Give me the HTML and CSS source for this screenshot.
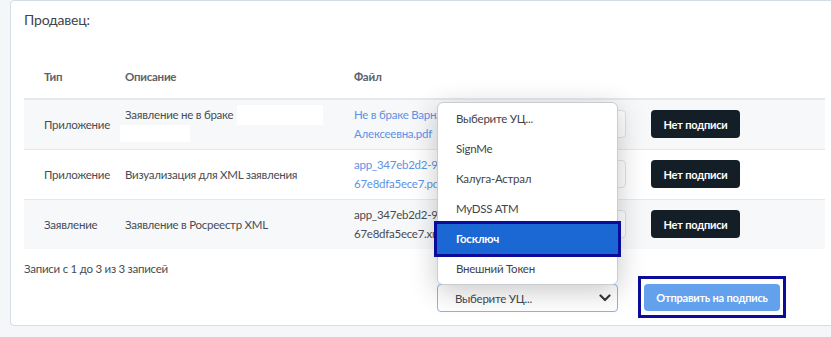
FILE: index.html
```html
<!DOCTYPE html>
<html lang="ru">
<head>
  <meta charset="UTF-8" />
  <title>Подписание документов</title>
  <link rel="stylesheet" href="styles.css">
</head>
<body>
  <div class="card">
    <h2 class="card-title">Продавец:</h2>

    <table class="docs">
      <colgroup>
        <col class="c-type"><col class="c-desc"><col class="c-file"><col class="c-ca"><col class="c-sign"><col>
      </colgroup>
      <thead>
        <tr>
          <th>Тип</th>
          <th>Описание</th>
          <th>Файл</th>
          <th></th>
          <th></th>
          <th></th>
        </tr>
      </thead>
      <tbody>
        <tr class="odd">
          <td>Приложение</td>
          <td>Заявление не в браке<span class="redact r1"></span><br><span class="redact r2"></span></td>
          <td><a href="#" class="file">Не в браке Варнавская<br>Алексеевна.pdf</a></td>
          <td><div class="ca-select"></div></td>
          <td><button class="btn-dark">Нет подписи</button></td>
          <td></td>
        </tr>
        <tr>
          <td>Приложение</td>
          <td>Визуализация для XML заявления</td>
          <td><a href="#" class="file">app_347eb2d2-9e4c-4b1a-<br>67e8dfa5ece7.pdf</a></td>
          <td><div class="ca-select"></div></td>
          <td><button class="btn-dark">Нет подписи</button></td>
          <td></td>
        </tr>
        <tr class="odd">
          <td>Заявление</td>
          <td>Заявление в Росреестр XML</td>
          <td><span class="file plain">app_347eb2d2-9e4c-4b1a-<br>67e8dfa5ece7.xml</span></td>
          <td><div class="ca-select"></div></td>
          <td><button class="btn-dark">Нет подписи</button></td>
          <td></td>
        </tr>
      </tbody>
    </table>

    <p class="info">Записи с 1 до 3 из 3 записей</p>

    <div class="actions">
      <div class="select-wrap">
        <div class="select">
          <span>Выберите УЦ...</span>
          <svg width="12" height="8" viewBox="0 0 12 8"><path d="M1.5 1.5 6 6l4.5-4.5" fill="none" stroke="#343a40" stroke-width="2.2" stroke-linecap="round" stroke-linejoin="round"/></svg>
        </div>
        <ul class="menu">
          <li>Выберите УЦ...</li>
          <li>SignMe</li>
          <li>Калуга-Астрал</li>
          <li>MyDSS ATM</li>
          <li class="active">Госключ</li>
          <li>Внешний Токен</li>
        </ul>
      </div>
      <div class="mark">
        <button class="btn-send">Отправить на подпись</button>
      </div>
    </div>
  </div>
</body>
</html>
```

FILE: styles.css
```css
* {
  margin: 0;
  padding: 0;
  box-sizing: border-box;
}
body {
  font-family: 'Lato', 'Noto Sans', sans-serif;
  font-size: 11.5px;
  letter-spacing: -0.25px;
  background: #f4f6f9;
  color: #474c52;
  padding-left: 10px;
  overflow: hidden;
  height: 337px;
}
.card {
  width: 830px;
  background: white;
  border: 1px solid #d3dee5;
  border-radius: 4px;
  padding: 9px 13px 13px;
}
.card-title {
  font-size: 14px;
  font-weight: normal;
  line-height: 19px;
  letter-spacing: -0.2px;
  color: #3f444a;
}
.docs {
  width: 801px;
  margin-top: 25px;
  border-collapse: collapse;
  table-layout: fixed;
}
.c-type { width: 81px; }
.c-desc { width: 229px; }
.c-file { width: 180px; }
.c-ca { width: 117px; }
.c-sign { width: 120px; }
th, td {
  text-align: left;
  padding: 0 0 0 20px;
  vertical-align: middle;
  line-height: 19px;
}
th {
  height: 45px;
  font-weight: bold;
  color: #5d6268;
  border-bottom: 2px solid #e6e8eb;
}
td {
  height: 50px;
  border-top: 1px solid #e6e8eb;
}
tbody tr:first-child td {
  border-top: none;
}
tr.odd td {
  background: #f7f8fa;
}
.redact {
  display: inline-block;
  background: white;
  vertical-align: top;
}
.redact.r1 {
  width: 86px;
  height: 20px;
  margin-left: 4px;
}
.redact.r2 {
  width: 70px;
  height: 17px;
  margin-left: -5px;
}
.file {
  color: #5d92e6;
  text-decoration: none;
  white-space: nowrap;
}
.file.plain {
  color: #474c52;
}
.ca-select {
  width: 92px;
  height: 28px;
  border: 1px solid #dfe3e7;
  border-radius: 4px;
  background: white;
}
.btn-dark {
  font-family: inherit;
  font-size: 11px;
  font-weight: bold;
  letter-spacing: -0.2px;
  color: white;
  background: #141e27;
  border: none;
  border-radius: 4px;
  width: 89px;
  height: 28px;
}
.info {
  margin-top: 11px;
  line-height: 18px;
}
.actions {
  display: flex;
  align-items: flex-start;
  gap: 20px;
  margin-top: 6px;
  padding-left: 413px;
}
.select-wrap {
  position: relative;
}
.select {
  width: 181px;
  height: 28px;
  border: 1px solid #86b5ea;
  border-radius: 4px;
  display: flex;
  align-items: center;
  justify-content: space-between;
  padding: 0 6px 0 17px;
  color: #454a50;
}
.menu {
  position: absolute;
  left: 0;
  bottom: 27px;
  width: 181px;
  list-style: none;
  background: white;
  border: 1px solid #c9ccd0;
  border-radius: 6px;
  padding: 1px 0 0;
  box-shadow: 0 6px 28px rgba(0, 0, 0, 0.22);
}
.menu li {
  height: 30px;
  line-height: 30px;
  padding-left: 18px;
  color: #3f444a;
}
.menu li.active {
  background: #1b67d3;
  color: white;
  font-weight: bold;
  outline: 3px solid #0b0b9c;
  margin: 0 -1px;
  padding-left: 19px;
}
.mark {
  border: 3px solid #0b0b9c;
  padding: 5px 3px 4px;
  margin: -8px 0 -6px;
}
.btn-send {
  display: block;
  font-family: inherit;
  font-size: 11px;
  font-weight: bold;
  letter-spacing: -0.2px;
  color: white;
  background: #64a1ec;
  border: none;
  border-radius: 4px;
  width: 136px;
  height: 27px;
}
```
